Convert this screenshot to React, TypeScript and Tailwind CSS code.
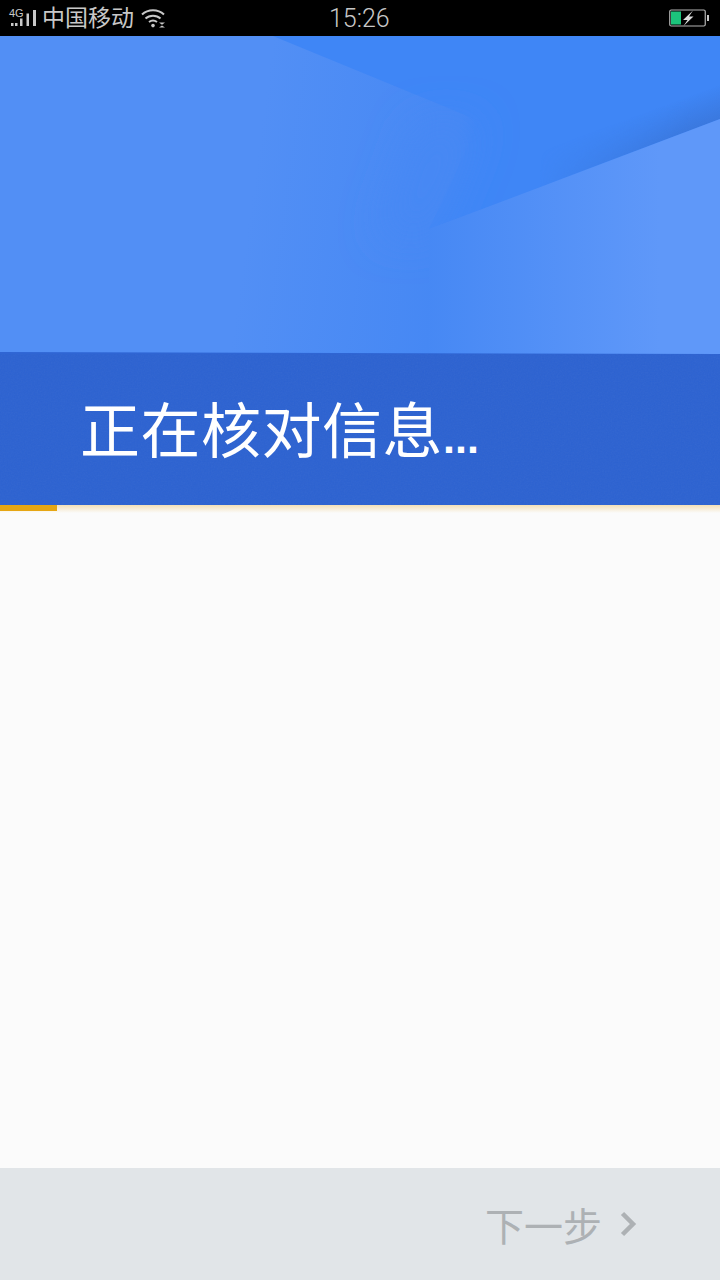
// App.tsx
const cjk = "font-['Noto_Sans_CJK_SC','Noto_Sans',sans-serif]";

function SignalIcon() {
  return (
    <div className="relative w-[40px] h-9">
      <span className="absolute left-[9px] top-[7px] text-[11px] leading-[12px] text-[#c8c8c8] font-['Liberation_Sans',sans-serif]">4G</span>
      <svg width="40" height="36" viewBox="0 0 40 36" fill="#c8c8c8">
        <rect x="11" y="23" width="2.5" height="3" />
        <rect x="15" y="23" width="2.5" height="3" />
        <rect x="20" y="18.5" width="2.5" height="7.5" />
        <rect x="26.5" y="13.5" width="2.5" height="12.5" />
        <rect x="33" y="10" width="3" height="16" />
      </svg>
    </div>
  );
}

function WifiIcon() {
  return (
    <svg width="25" height="20" viewBox="0 0 25 20" fill="none" stroke="#c8c8c8" strokeWidth="2">
      <path d="M1 6.5 C7 0.8 17 0.8 23 6.5" />
      <path d="M4.5 10.5 C8.5 6.8 15.5 6.8 19.5 10.5" />
      <path d="M8 14 C10.5 12.2 13.5 12.2 16 14" />
      <circle cx="12" cy="17.6" r="1.8" fill="#c8c8c8" stroke="none" />
      <path d="M18 14.6 h6 l-3 2.2z" fill="#c8c8c8" stroke="none" />
      <path d="M18 19.6 h6 l-3 -2.2z" fill="#c8c8c8" stroke="none" />
    </svg>
  );
}

function BatteryIcon() {
  return (
    <svg width="40" height="18" viewBox="0 0 40 18" fill="none">
      <rect x="0.75" y="1" width="35.5" height="16" rx="1.5" stroke="#b4b4b4" strokeWidth="1.2" />
      <rect x="2" y="2.5" width="10" height="13" fill="#1cc47c" />
      <path d="M24 1.5 L14 11 H18.5 L14.5 17 L24.5 7.5 H20 Z" fill="#dcdcdc" />
      <rect x="38" y="6" width="2" height="6" fill="#c8c8c8" />
    </svg>
  );
}

function HeroArt() {
  return (
    <svg className="absolute inset-0" width="720" height="318" viewBox="0 0 720 318" preserveAspectRatio="none">
      <defs>
        <linearGradient id="mid" x1="230" y1="318" x2="472" y2="351" gradientUnits="userSpaceOnUse">
          <stop offset="0" stopColor="#528ff5" />
          <stop offset="0.8" stopColor="#4688f4" />
          <stop offset="0.87" stopColor="#3f86f6" />
        </linearGradient>
        <linearGradient id="light" x1="425" y1="0" x2="660" y2="0" gradientUnits="userSpaceOnUse">
          <stop offset="0" stopColor="#4688f4" />
          <stop offset="1" stopColor="#5f98f9" />
        </linearGradient>
        <linearGradient id="edge" x1="709" y1="53" x2="720" y2="83" gradientUnits="userSpaceOnUse">
          <stop offset="0" stopColor="#3a77dc" stopOpacity="0" />
          <stop offset="1" stopColor="#3a77dc" stopOpacity="0.9" />
        </linearGradient>
        <linearGradient id="edgeFade" x1="540" y1="0" x2="690" y2="0" gradientUnits="userSpaceOnUse">
          <stop offset="0" stopColor="#000" />
          <stop offset="1" stopColor="#fff" />
        </linearGradient>
        <mask id="edgeMask">
          <rect width="720" height="318" fill="url(#edgeFade)" />
        </mask>
        <filter id="soft" x="-50%" y="-50%" width="200%" height="200%">
          <feGaussianBlur stdDeviation="20" />
        </filter>
      </defs>
      <rect width="720" height="318" fill="url(#mid)" />
      <polygon points="273,0 720,0 720,83 429,193 480,85" fill="#3f86f6" />
      {/* softens the lower left side of the dark shape */}
      <polygon points="478,88 432,200 380,200 420,88" fill="#4688f4" filter="url(#soft)" />
      <polygon points="500,0 720,0 720,83 500,166" fill="url(#edge)" mask="url(#edgeMask)" />
      <polygon points="720,83 429,193 429,318 720,318" fill="url(#light)" />
      <polygon points="0,316 720,318 0,318" fill="#2f65d3" />
    </svg>
  );
}

function BandNoise() {
  return (
    <svg className="absolute inset-0 opacity-[0.05]" width="720" height="151">
      <filter id="grain">
        <feTurbulence type="fractalNoise" baseFrequency="0.7" numOctaves="2" />
        <feColorMatrix type="saturate" values="0" />
      </filter>
      <rect width="720" height="151" filter="url(#grain)" />
    </svg>
  );
}

export default function App() {
  return (
    <div className={`flex flex-col w-[720px] h-[1280px] bg-[#fbfbfb] overflow-hidden ${cjk}`}>
      {/* status bar */}
      <div className="flex items-center h-9 bg-black relative text-[#c8c8c8] text-[23px] leading-none">
        <div className="flex items-center flex-1">
          <SignalIcon />
          <span className="ml-[2px] pb-[3px]">中国移动</span>
          <div className="ml-[7px]"><WifiIcon /></div>
        </div>
        <span className="absolute left-[329px] text-[25px] font-light font-['Roboto',sans-serif]">15:26</span>
        <div className="pr-[11px]"><BatteryIcon /></div>
      </div>

      {/* header */}
      <div className="relative h-[318px]">
        <HeroArt />
      </div>
      <div className="relative flex items-center h-[151px] bg-[#2c62d1] pl-[80px] pb-[3px]">
        <BandNoise />
        <span className="relative text-white text-[60px] leading-none tracking-[0.5px]">
          正在核对信息<span className="font-['Liberation_Sans',sans-serif] font-bold text-[43px] tracking-normal">...</span>
        </span>
      </div>

      {/* progress */}
      <div className="flex items-start h-[8px] bg-gradient-to-b from-[#f3dfb7] to-[#fbfbfb]">
        <div className="w-[57px] h-[6px] bg-[#e6a613]" />
      </div>

      <div className="flex-1" />

      {/* footer */}
      <div className="flex items-center justify-end h-[112px] bg-[#e1e5e8] pr-[83px]">
        <span className="text-[#adb1b4] text-[39px] leading-none">下一步</span>
        <svg className="ml-[18px]" width="17" height="26" viewBox="0 0 17 26" fill="none" stroke="#adb1b4" strokeWidth="4.5">
          <path d="M2.5 2.5 L13 13 L2.5 23.5" />
        </svg>
      </div>
    </div>
  );
}
